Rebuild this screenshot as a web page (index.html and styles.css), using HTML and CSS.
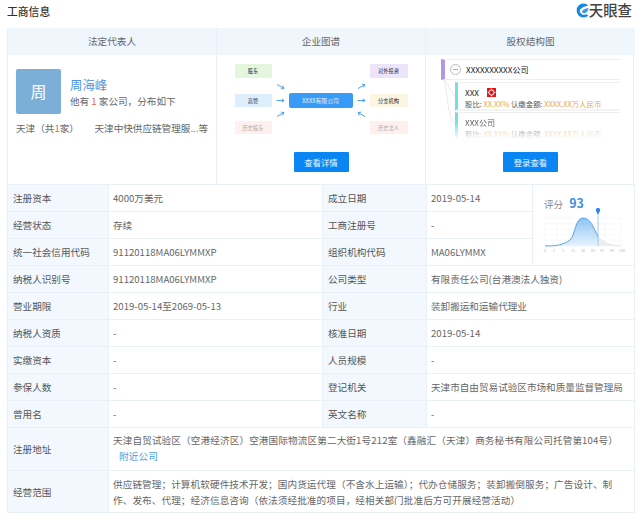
FILE: index.html
```html
<!DOCTYPE html>
<html lang="zh">
<head>
<meta charset="utf-8">
<title>工商信息</title>
<link rel="stylesheet" href="styles.css">
</head>
<body>
<header class="top">
  <h1>工商信息</h1>
  <div class="logo">
    <svg width="14" height="15" viewBox="0 0 14 15"><path fill="#1c86d8" d="M13.4 2.4A7 7 0 1 0 13.4 12.6L11 11.2A4.4 4.4 0 0 1 4.6 7.8C5 5.4 8.6 3.4 13.4 2.4Z"/><path fill="#2f9be6" d="M13.6 5C10.4 5.4 7.6 6.6 7 8.6C7.2 10 8.8 10.6 10.2 10C12 9.2 13.2 7 13.6 5Z"/></svg>
    <span>天眼查</span>
  </div>
</header>
<main class="box">
  <section class="cards">
    <div class="card card-a">
      <h2>法定代表人</h2>
      <div class="body person">
        <div class="who">
          <div class="avatar">周</div>
          <div>
            <div class="name">周海峰</div>
            <div class="sub">他有 <em>1</em> 家公司，分布如下</div>
          </div>
        </div>
        <div class="dist"><span>天津（共<em>1</em>家）</span><span>天津中快供应链管理服...等</span></div>
      </div>
    </div>
    <div class="card card-b">
      <h2>企业图谱</h2>
      <div class="body graph-body">
        <div class="graph">
          <div class="node g r1 c1">股东</div>
          <div class="arrow r2 c2"><svg width="9" height="7" viewBox="0 0 9 7"><path d="M1 1.5L7 4.8M8 5.4L4.8 5.9M8 5.4L6.6 2.6" class="ar"/></svg></div>
          <div class="node b r3 c1">高管</div>
          <div class="arrow r3 c2"><svg width="9" height="7" viewBox="0 0 9 7"><path d="M.5 3.5H7.5M8.2 3.5L5.8 2M8.2 3.5L5.8 5" class="ar"/></svg></div>
          <div class="node p faded r5 c1">历史股东</div>
          <div class="arrow r4 c2"><svg width="9" height="7" viewBox="0 0 9 7"><path d="M1 5.5L7 2.2M8 1.6L4.8 1.1M8 1.6L6.6 4.4" class="ar"/></svg></div>
          <div class="center">XXXX有限公司</div>
          <div class="arrow r2 c4"><svg width="9" height="7" viewBox="0 0 9 7"><path d="M1 5.5L7 2.2M8 1.6L4.8 1.1M8 1.6L6.6 4.4" class="ar"/></svg></div>
          <div class="node v r1 c5">对外投资</div>
          <div class="arrow r3 c4"><svg width="9" height="7" viewBox="0 0 9 7"><path d="M.5 3.5H7.5M8.2 3.5L5.8 2M8.2 3.5L5.8 5" class="ar"/></svg></div>
          <div class="node y r3 c5">分支机构</div>
          <div class="arrow r4 c4"><svg width="9" height="7" viewBox="0 0 9 7"><path d="M8 5.5L2 2.2M1 1.6L4.2 1.1M1 1.6L2.4 4.4" class="ar"/></svg></div>
          <div class="node p faded r5 c5">历史法人</div>
        </div>
        <div class="btn">查看详情</div>
      </div>
    </div>
    <div class="card card-c">
      <h2>股权结构图</h2>
      <div class="body equity-body">
        <div class="equity">
          <svg class="links" width="20" height="75" viewBox="0 0 20 75"><path fill="none" stroke="#e4e4e4" stroke-width=".8" d="M3 20C8 26 9 32 14 38M3 20C7 36 6 56 14 66"/></svg>
          <div class="eq-root"><i class="minus"></i><span>XXXXXXXXXX公司</span></div>
          <div class="eq-row">
            <div class="eq-title">XXX<svg class="flag" width="9" height="9" viewBox="0 0 9 9"><rect width="9" height="9" fill="#e8141c"/><circle cx="4.5" cy="4.5" r="2.6" fill="none" stroke="#fff" stroke-width="1"/><path d="M4.5 .6V2M4.5 7V8.4M.6 4.5H2M7 4.5H8.4" stroke="#fff" stroke-width=".8"/></svg></div>
            <div class="eq-line">股比: <b>XX.XX%</b> 认缴金额: <b>XXXX.XX万人民币</b></div>
          </div>
          <div class="eq-row eq-fade">
            <div class="eq-title">XXX公司</div>
            <div class="eq-line">股比: <b>XX.XX%</b> 认缴金额: <b>XXXX.XX万人民币</b></div>
          </div>
        </div>
        <div class="btn">登录查看</div>
      </div>
    </div>
  </section>
  <table class="info">
    <colgroup><col class="c-l1"><col class="c-v1"><col class="c-l2"><col class="c-v2"><col class="c-s"></colgroup>
    <tr><th>注册资本</th><td>4000万美元</td><th>成立日期</th><td>2019-05-14</td>
      <td rowspan="3" class="score">
        <div class="score-head"><span>评分</span><strong>93</strong></div>
        <svg class="chart" width="88" height="46" viewBox="0 0 88 46">
          <g stroke="#eef2f6" stroke-width=".5" fill="none">
            <path d="M2 10H78M2 15.600H78M2 21.200H78M2 26.800H78M2 32.400H78M2 38H78"/>
            <path d="M2 10V38M14 10V38M26 10V38M38 10V38M50 10V38M62 10V38M78 10V38"/>
          </g>
          <defs><linearGradient id="fill" x1="0" y1="0" x2="0" y2="1"><stop offset="0" stop-color="#8cc4f4"/><stop offset="1" stop-color="#e6f3fd"/></linearGradient></defs>
          <path fill="url(#fill)" d="M2 38C14 38 20 37 27 32C32 28 32 10 40 10C47 10 50 18 55 29L55 38Z"/>
          <path fill="#eceef1" d="M55 29C60 34 68 38 78 38H55Z"/>
          <path fill="none" stroke="#5aa4ec" d="M2 38C14 38 20 37 27 32C32 28 32 10 40 10C47 10 50 18 55 29"/>
          <path fill="none" stroke="#d8dce2" stroke-width=".7" d="M55 29C60 34 68 38 78 38"/>
          <path stroke="#8ebdf0" stroke-width=".8" d="M55 4V38"/>
          <path fill="#2f86e6" d="M55 6.500L53 3A2.200 2.200 0 1 1 57 3Z"/>
          <text x="1" y="44">0</text><text x="10" y="44">1</text><text x="19" y="44">3</text><text x="28" y="44">15</text><text x="38" y="44">50</text><text x="48" y="44">85</text><text x="57" y="44">97</text><text x="67" y="44">99</text><text x="76" y="44">100</text>
        </svg>
      </td></tr>
    <tr><th>经营状态</th><td>存续</td><th>工商注册号</th><td>-</td></tr>
    <tr><th>统一社会信用代码</th><td>91120118MA06LYMMXP</td><th>组织机构代码</th><td>MA06LYMMX</td></tr>
    <tr><th>纳税人识别号</th><td>91120118MA06LYMMXP</td><th>公司类型</th><td colspan="2">有限责任公司(台港澳法人独资)</td></tr>
    <tr><th>营业期限</th><td>2019-05-14至2069-05-13</td><th>行业</th><td colspan="2">装卸搬运和运输代理业</td></tr>
    <tr><th>纳税人资质</th><td>-</td><th>核准日期</th><td colspan="2">2019-05-14</td></tr>
    <tr><th>实缴资本</th><td>-</td><th>人员规模</th><td colspan="2">-</td></tr>
    <tr><th>参保人数</th><td>-</td><th>登记机关</th><td colspan="2">天津市自由贸易试验区市场和质量监督管理局</td></tr>
    <tr><th>曾用名</th><td>-</td><th>英文名称</th><td colspan="2">-</td></tr>
    <tr class="addr"><th>注册地址</th><td colspan="4">天津自贸试验区（空港经济区）空港国际物流区第二大街1号212室（鑫融汇（天津）商务秘书有限公司托管第104号）<br><a class="near">附近公司</a></td></tr>
    <tr class="biz"><th>经营范围</th><td colspan="4">供应链管理；计算机软硬件技术开发；国内货运代理（不含水上运输）；代办仓储服务；装卸搬倒服务；广告设计、制<br>作、发布、代理；经济信息咨询（依法须经批准的项目，经相关部门批准后方可开展经营活动）</td></tr>
  </table>
</main>
</body>
</html>
```
FILE: styles.css
```css
* { box-sizing: border-box; }
html, body { margin: 0; padding: 0; background: #fff; }
body {
  width: 640px;
  height: 517px;
  overflow: hidden;
  font-family: "Noto Sans CJK SC", "Noto Sans", sans-serif;
  font-size: 9.6px;
  color: #666;
}
em { font-style: normal; color: #e8604c; }
.top {
  height: 28px;
  padding: 0 8px 6px 7px;
  display: flex;
  align-items: center;
  justify-content: space-between;
}
h1 { margin: 0; font-size: 10.8px; font-weight: 500; color: #333; line-height: 20px; }
.logo { display: flex; align-items: center; gap: 0; padding-bottom: 2px; }
.logo span { font-size: 14.4px; line-height: 18px; font-weight: 500; color: #444; }
.box { margin: 0 6px 0 7px; }
.cards {
  display: grid;
  grid-template-columns: 209px 209px 209px;
  height: 156px;
  border-right: 1px solid #e9f0f7;
  border-left: 1px solid #e9f0f7;
}
.card { display: flex; flex-direction: column; border-right: 1px solid #e9f0f7; }
.card:last-child { border-right: 0; }
h2 {
  margin: 0;
  height: 27px;
  background: #eff6fc;
  font-size: 9.6px;
  font-weight: 400;
  line-height: 27px;
  text-align: center;
  color: #666;
}
.body { flex: 1; position: relative; }
.person { padding: 14px 8px 0 8px; }
.who { display: flex; gap: 9px; align-items: center; height: 45px; }
.avatar {
  width: 45px;
  height: 45px;
  border-radius: 2px;
  background: #7bafd8;
  color: #fff;
  font-size: 16px;
  line-height: 45px;
  text-align: center;
}
.name { font-size: 12.4px; line-height: 16px; color: #4b94e6; margin-top: 1px; }
.sub { line-height: 14px; margin-top: 1px; color: #666; }
.dist { display: flex; justify-content: space-between; margin-top: 7px; line-height: 14px; }
.graph-body, .equity-body { display: flex; flex-direction: column; align-items: center; }
.graph {
  margin-top: 9px;
  display: grid;
  grid-template-columns: 37px 17px 64px 17px 38px;
  grid-template-rows: 14px 16px 13px 14px 13px;
  width: 173px;
}
.node { font-size: 5.2px; line-height: 13px; text-align: center; color: #222; border-radius: 1px; }
.r1 { grid-row: 1; } .r2 { grid-row: 2; } .r3 { grid-row: 3; } .r4 { grid-row: 4; } .r5 { grid-row: 5; }
.c1 { grid-column: 1; } .c2 { grid-column: 2; } .c4 { grid-column: 4; } .c5 { grid-column: 5; }
.g { background: #e5f6de; } .b { background: #deeefc; } .p { background: #fdf0ef; }
.v { background: #ece5fa; } .y { background: #fcf5e2; }
.node.faded { color: #b0a8a8; }
.center {
  grid-row: 3; grid-column: 3;
  background: #399bf6;
  color: #e8f4ff;
  font-size: 5.8px;
  line-height: 15px;
  height: 15px;
  margin-top: -1px;
  text-align: center;
  border-radius: 2px;
}
.arrow { display: flex; align-items: center; justify-content: center; }
.arrow svg { display: block; }
.ar { fill: none; stroke: #4fa4f0; stroke-width: 1; }
.btn {
  width: 55px;
  height: 20px;
  margin-top: 18px;
  background: #0a86f4;
  border-radius: 1px;
  color: #eef7ff;
  font-size: 8.4px;
  line-height: 20px;
  text-align: center;
}
.equity { position: relative; width: 179px; margin-top: 4px; align-self: flex-start; margin-left: 15px; height: 79px; overflow: hidden; }
.links { position: absolute; left: 0; top: 0; }
.eq-root {
  height: 21px;
  border-top: 1px solid #eee;
  border-bottom: 1px solid #eee;
  border-left: 4px solid #b497dc;
  display: flex;
  align-items: center;
  gap: 5px;
  padding-left: 5px;
  font-size: 8.1px;
  color: #222;
}
.minus { width: 11px; height: 11px; border: 1px solid #bbb; border-radius: 50%; position: relative; }
.minus::after { content: ""; position: absolute; left: 2px; right: 2px; top: 4px; height: 1px; background: #aaa; }
.eq-row {
  margin: 2px 0 0 14px;
  height: 29px;
  border-top: 1px solid #eee;
  border-bottom: 2px solid #f3f3f3;
  border-left: 3px solid #74dfe3;
  padding-left: 7px;
  font-size: 7.4px;
  line-height: 11px;
  color: #555;
}
.eq-title { display: flex; align-items: center; gap: 8px; font-size: 8.1px; color: #222; padding-top: 3px; height: 15px; }
.eq-line b { font-weight: 400; color: #eaa84e; }
.eq-fade {
  margin-top: 1px;
  border-bottom: 0;
  -webkit-mask-image: linear-gradient(#000 35%, transparent 95%);
  mask-image: linear-gradient(#000 35%, transparent 95%);
}
.eq-fade .eq-title { color: #555; }
.equity-body .btn { margin-top: 14px; }
.info {
  width: 627px;
  border-collapse: collapse;
  table-layout: fixed;
}
.c-l1 { width: 101px; } .c-v1 { width: 214px; } .c-l2 { width: 104px; } .c-v2 { width: 106px; } .c-s { width: 102px; }
th, td {
  height: 27px;
  padding: 0 4px 0 5px;
  border: 1px solid #e9f0f7;
  font-weight: 400;
  text-align: left;
  vertical-align: middle;
  line-height: 14px;
  color: #666;
}
th { background: #f2f8fd; color: #555; }
.addr th, .addr td { height: 43px; }
.addr td { line-height: 16px; padding-bottom: 2px; letter-spacing: .13px; }
.biz th, .biz td { height: 42px; }
.biz td { line-height: 16px; letter-spacing: .1px; white-space: nowrap; }
td { padding-left: 4px; }
.near { color: #4f9ae6; padding-left: 6px; }
td.score { padding: 0; overflow: hidden; vertical-align: top; }
.score-head { display: flex; align-items: baseline; gap: 6px; height: 27px; padding: 9px 0 0 11px; line-height: 18px; color: #888; }
.score-head strong { font-size: 12.4px; font-weight: 600; color: #3f8fe8; }
.chart { display: block; margin: -4px 0 0 10px; }
.chart text { font-size: 3.6px; fill: #a8c4e0; }
```
